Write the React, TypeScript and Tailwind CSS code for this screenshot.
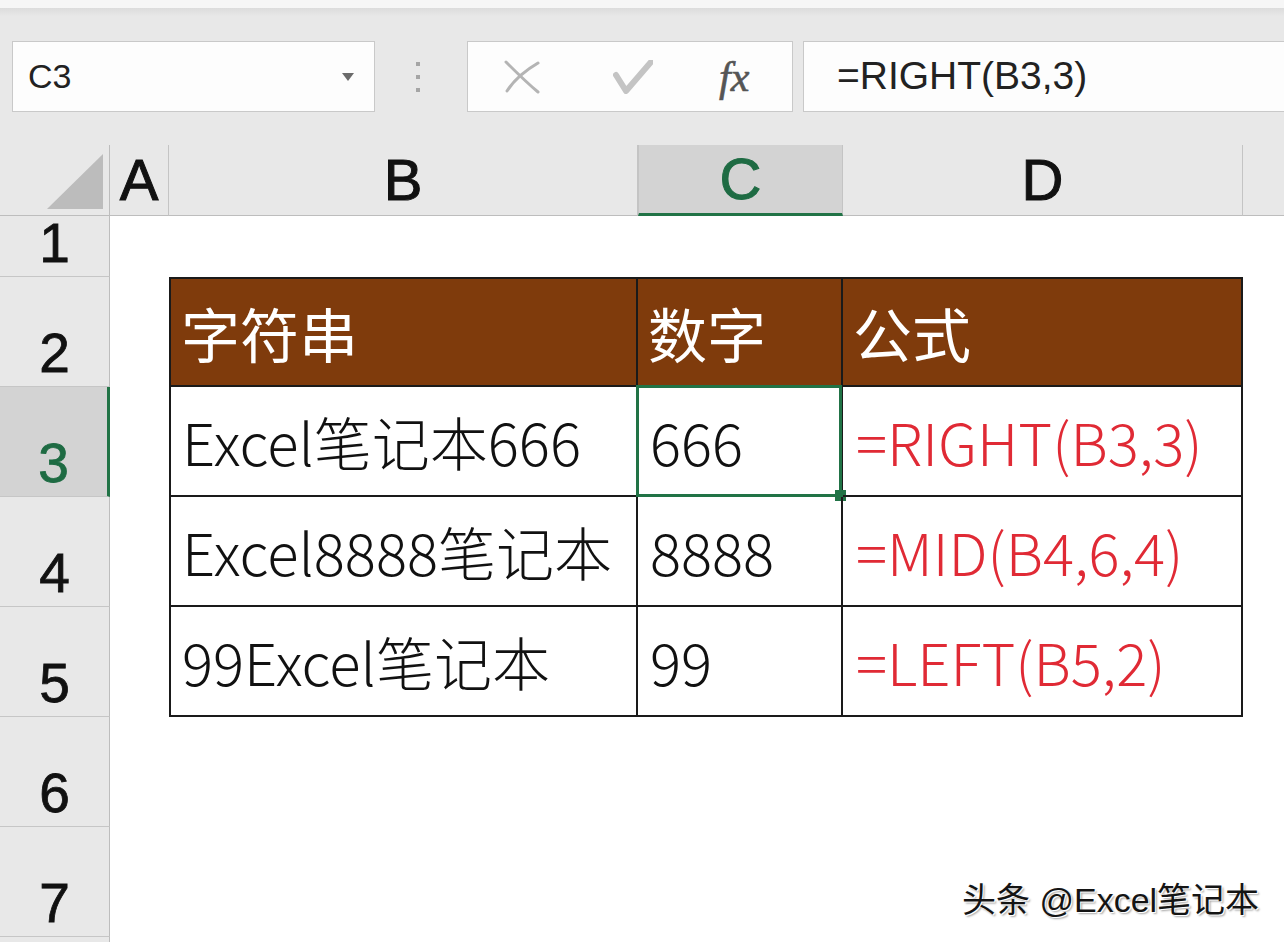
import React from 'react';

// ============================================================
// Sheet data
// ============================================================

const COLS = [
  { id: 'A', selected: false },
  { id: 'B', selected: false },
  { id: 'C', selected: true },
  { id: 'D', selected: false },
];

const ROWS = [1, 2, 3, 4, 5, 6, 7];

const TABLE = [
  ['Excel笔记本666', '666', '=RIGHT(B3,3)'],
  ['Excel8888笔记本', '8888', '=MID(B4,6,4)'],
  ['99Excel笔记本', '99', '=LEFT(B5,2)'],
];

const CJK = "font-['Noto_Sans_CJK_SC',sans-serif]";
const UI = "font-['Liberation_Sans','Noto_Sans_CJK_SC',sans-serif]";

// ============================================================
// Formula bar
// ============================================================

function FormulaBar() {
  return (
    <div className="h-[145px] flex flex-col">
      <div className="h-[8px] bg-[#f6f6f6]" />
      <div className="h-[8px] bg-gradient-to-b from-[#dcdcdc] to-[#e8e8e8]" />
      <div className="flex items-center pt-[25px] pl-[12px]">
        {/* name box */}
        <div className="w-[363px] h-[71px] shrink-0 bg-[#fdfdfd] border border-[#c9c9c9] flex items-center pl-[15px] pr-[20px]">
          <span className={`${UI} text-[34px] text-[#222] flex-1`}>C3</span>
          <svg width="12" height="8" viewBox="0 0 12 8">
            <polygon points="0,0 12,0 6,8" fill="#6b6b6b" />
          </svg>
        </div>

        {/* grip dots */}
        <div className="w-[92px] shrink-0 flex flex-col items-center gap-[9px] pr-[6px]">
          <div className="w-[4px] h-[4px] bg-[#a5a5a5]" />
          <div className="w-[4px] h-[4px] bg-[#a5a5a5]" />
          <div className="w-[4px] h-[4px] bg-[#a5a5a5]" />
        </div>

        {/* cancel / enter / fx */}
        <div className="w-[326px] h-[71px] shrink-0 bg-[#fdfdfd] border border-[#c9c9c9] flex items-center">
          <svg className="ml-[36px]" width="36" height="34" viewBox="0 0 36 34">
            <path d="M2 2 C 12 12, 22 22, 34 32" stroke="#b4b4b4" strokeWidth="3" fill="none" strokeLinecap="round" />
            <path d="M34 3 C 22 10, 10 20, 3 31" stroke="#b4b4b4" strokeWidth="3" fill="none" strokeLinecap="round" />
          </svg>
          <svg className="ml-[73px]" width="40" height="34" viewBox="0 0 40 34">
            <path d="M3 15 L13 31 L38 2" stroke="#c4c4c4" strokeWidth="6" fill="none" strokeLinecap="round" strokeLinejoin="round" />
          </svg>
          <span className="ml-[66px] font-['Liberation_Serif',serif] italic text-[42px] text-[#555] leading-none [-webkit-text-stroke-width:0.6px]">
            fx
          </span>
        </div>

        {/* formula input */}
        <div className="ml-[10px] w-[500px] h-[71px] shrink-0 bg-[#fdfdfd] border border-[#c9c9c9] flex items-center pl-[33px]">
          <span className={`${UI} text-[39px] text-[#222]`}>=RIGHT(B3,3)</span>
        </div>
      </div>
    </div>
  );
}

// ============================================================
// Data table (B2:D5)
// ============================================================

function DataTable() {
  const headers = ['字符串', '数字', '公式'];
  return (
    <div className="col-start-3 col-end-6 row-start-3 row-end-7 grid grid-cols-[469px_205px_400px] grid-rows-[repeat(4,110px)] bg-white">
      {headers.map((h, i) => (
        <div
          key={h}
          className={`bg-[#7f3b0c] border-t-2 border-r-2 border-b-2 border-[#1a1a1a] flex items-center pl-[10px] ${
            i === 0 ? 'border-l-2' : ''
          }`}
        >
          <span className={`${CJK} text-[59px] text-white leading-none`}>{h}</span>
        </div>
      ))}
      {TABLE.map((row, r) =>
        row.map((cell, c) => {
          const selected = r === 0 && c === 1;
          return (
            <div
              key={`${r}-${c}`}
              className={`relative border-r-2 border-b-2 border-[#1a1a1a] flex items-center ${
                c === 0 ? 'border-l-2 pl-[11px]' : c === 1 ? 'pl-[12px]' : 'pl-[13px]'
              }`}
            >
              <span
                className={`${CJK} text-[58px] font-light leading-none ${
                  c === 2 ? 'text-[#e02a35]' : 'text-[#111]'
                }`}
              >
                {cell}
              </span>
              {selected && (
                <div className="absolute left-[-2px] top-[-2px] right-[-1px] bottom-[-2px] border-[3px] border-[#217346]">
                  <div className="absolute right-[-7px] bottom-[-7px] w-[11px] h-[11px] bg-[#217346]" />
                </div>
              )}
            </div>
          );
        })
      )}
    </div>
  );
}

// ============================================================
// Main
// ============================================================

export default function App() {
  return (
    <div className="relative w-[1284px] h-[942px] overflow-hidden bg-[#e8e8e8]">
      <FormulaBar />

      <div className="grid grid-cols-[110px_59px_469px_205px_400px_1fr] grid-rows-[71px_61px_110px_110px_110px_110px_110px_110px_1fr] h-[797px]">
        {/* corner */}
        <div className="border-r border-b border-[#bdbdbd] flex items-start justify-end pr-[6px] pt-[9px]">
          <svg width="56" height="55" viewBox="0 0 56 55">
            <polygon points="56,0 56,55 0,55" fill="#bcbcbc" />
          </svg>
        </div>

        {/* column headers */}
        {COLS.map((col) => (
          <div
            key={col.id}
            className={`flex items-center justify-center border-r border-[#c4c4c4] ${
              col.selected
                ? 'bg-[#d3d3d3] border-l border-b-[3px] border-b-[#217346]'
                : 'border-b border-b-[#bdbdbd]'
            }`}
          >
            <span
              className={`${UI} text-[58px] leading-none [-webkit-text-stroke-width:1px] ${
                col.selected ? 'text-[#1e6b43]' : 'text-[#111]'
              }`}
            >
              {col.id}
            </span>
          </div>
        ))}
        <div className="border-b border-[#bdbdbd]" />

        {/* row headers */}
        {ROWS.map((r) => (
          <div
            key={r}
            style={{ gridRow: r + 1 }}
            className={`col-start-1 flex items-end justify-center pb-[5px] border-b border-[#c6c6c6] ${
              r === 3 ? 'bg-[#d3d3d3] border-r-[3px] border-r-[#217346]' : 'border-r border-r-[#bdbdbd]'
            }`}
          >
            <span
              className={`${UI} text-[55px] leading-none [-webkit-text-stroke-width:0.8px] ${
                r === 3 ? 'text-[#1e6b43]' : 'text-[#111]'
              }`}
            >
              {r}
            </span>
          </div>
        ))}
        <div style={{ gridRow: 9 }} className="col-start-1 border-r border-[#bdbdbd]" />

        <div className="col-start-2 col-end-7 row-start-2 row-end-10 bg-white" />

        <DataTable />
      </div>

      {/* watermark */}
      <div
        className={`absolute left-[962px] top-[883px] ${UI} text-[34px] text-[#141414] leading-none [text-shadow:1px_1px_0_#fff,2px_2px_2px_rgba(0,0,0,0.35)]`}
      >
        头条 @Excel笔记本
      </div>
    </div>
  );
}
